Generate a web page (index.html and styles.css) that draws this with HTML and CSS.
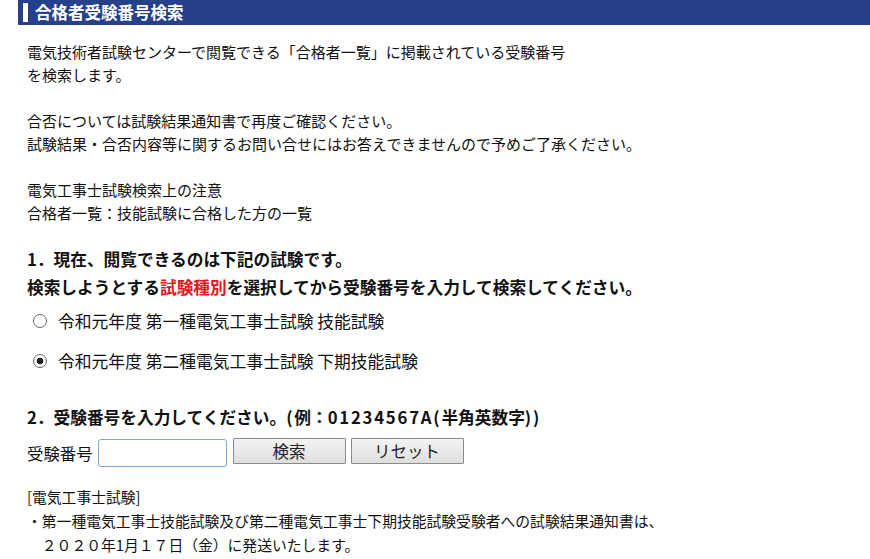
FILE: index.html
```html
<!DOCTYPE html>
<html lang="ja">
<head>
  <meta charset="UTF-8">
  <title>合格者受験番号検索</title>
  <link rel="stylesheet" href="styles.css">
</head>
<body>

<h1 class="page-title"><span class="mark"></span>合格者受験番号検索</h1>

<div class="content">
  <p class="intro">
    電気技術者試験センターで閲覧できる「合格者一覧」に掲載されている受験番号<br>
    を検索します。<br>
    <br>
    合否については試験結果通知書で再度ご確認ください。<br>
    試験結果・合否内容等に関するお問い合せにはお答えできませんので予めご了承ください。<br>
    <br>
    電気工事士試験検索上の注意<br>
    合格者一覧：技能試験に合格した方の一覧
  </p>

  <h2 class="step">1．現在、閲覧できるのは下記の試験です。<br>
    検索しようとする<span class="red">試験種別</span>を選択してから受験番号を入力して検索してください。</h2>

  <div class="exams">
    <label class="exam"><input type="radio" name="shiken" value="1">令和元年度 第一種電気工事士試験 技能試験</label>
    <label class="exam"><input type="radio" name="shiken" value="2" checked>令和元年度 第二種電気工事士試験 下期技能試験</label>
  </div>

  <h2 class="step step2">2．受験番号を入力してください。<span class="latin">(</span>例：<span class="latin">01234567A(</span>半角英数字<span class="latin">))</span></h2>

  <form class="search-row" onsubmit="return false">
    <span class="search-label">受験番号</span>
    <input type="text" class="number-input">
    <button type="submit" class="btn">検索</button>
    <button type="reset" class="btn">リセット</button>
  </form>

  <div class="notes">
    [電気工事士試験]<br>
    ・第一種電気工事士技能試験及び第二種電気工事士下期技能試験受験者への試験結果通知書は、<br>
    &emsp;２０２０年1月１７日（金）に発送いたします。
  </div>
</div>

</body>
</html>
```

FILE: styles.css
```css
body {
  margin: 0;
  padding: 0;
  background: #fff;
  color: #111;
  font-family: "Noto Sans CJK JP", "Noto Sans", sans-serif;
}

.page-title {
  margin: 0 0 0 18px;
  height: 25px;
  background: #26418a;
  color: #fff;
  font-size: 16.5px;
  font-weight: bold;
  line-height: 25px;
  display: flex;
  align-items: center;
}

.page-title .mark {
  width: 5px;
  height: 19px;
  background: #fff;
  margin: 0 7px 0 5px;
}

.content {
  padding-left: 27px;
}

.intro {
  margin: 15px 0 0;
  font-size: 15px;
  line-height: 23px;
}

.step {
  margin: 22px 0 0;
  font-size: 16.7px;
  font-weight: bold;
  line-height: 27.5px;
}

.step .latin {
  letter-spacing: 1.8px;
}

.red {
  color: #e8141c;
}

.exams {
  display: flex;
  flex-direction: column;
}

.exam {
  height: 40px;
  display: flex;
  align-items: center;
  padding-left: 6px;
  font-size: 16.8px;
}

.exam input {
  appearance: none;
  -webkit-appearance: none;
  box-sizing: border-box;
  width: 14px;
  height: 14px;
  margin: 0 11px 0 0;
  border: 1px solid #666;
  border-radius: 50%;
  background: #fff;
}

.exam input:checked {
  background: radial-gradient(circle, #222 0 3px, #fff 3.6px);
}

.step2 {
  margin-top: 23px;
}

.search-row {
  margin: 6px 0 0;
  display: flex;
  align-items: flex-start;
}

.search-label {
  font-size: 16.4px;
  line-height: 28px;
  margin: 1px 5px 0 0;
}

.number-input {
  box-sizing: border-box;
  width: 129px;
  height: 28px;
  margin: 1px 6px 0 0;
  border: 1.5px solid #7ea6dc;
  border-radius: 3px;
  outline: none;
}

.btn {
  box-sizing: border-box;
  width: 113px;
  height: 26px;
  margin-right: 5px;
  border: 1px solid #8a8a8a;
  border-radius: 1px;
  background: linear-gradient(#f4f4f4, #dedede);
  font-family: inherit;
  font-size: 16.5px;
  line-height: 22px;
  color: #222;
  padding: 0;
}

.notes {
  margin-top: 18px;
  font-size: 14.8px;
  line-height: 24px;
}
```
